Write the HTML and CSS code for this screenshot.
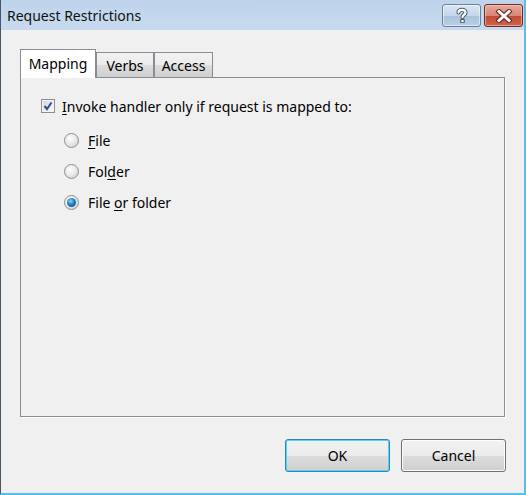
FILE: index.html
```html
<!DOCTYPE html>
<html>
<head>
<meta charset="utf-8">
<link rel="stylesheet" href="styles.css">
</head>
<body>
<div class="window">
  <div class="titlebar">
    <span class="title">Request Restrictions</span>
    <div class="caption-btns">
      <div class="cap-btn help">
        <svg width="16" height="17" viewBox="0 0 16 17">
          <path d="M4.5 5.5 C4.5 2 11.5 2 11.5 5.5 C11.5 7.8 8.5 7.8 8.5 10" fill="none" stroke="#4a5a6a" stroke-width="4.2" stroke-linecap="round"/>
          <rect x="6.3" y="12" width="4.4" height="4" fill="#4a5a6a"/>
          <path d="M4.5 5.5 C4.5 2 11.5 2 11.5 5.5 C11.5 7.8 8.5 7.8 8.5 10" fill="none" stroke="#fff" stroke-width="2.2" stroke-linecap="round"/>
          <rect x="7.4" y="13" width="2.2" height="2.2" fill="#fff"/>
        </svg>
      </div>
      <div class="cap-btn close">
        <svg width="18" height="14" viewBox="0 0 18 14">
          <path d="M4 2.5 L14 11.5 M14 2.5 L4 11.5" stroke="#5a2a22" stroke-width="5" stroke-linecap="square"/>
          <path d="M4 2.5 L14 11.5 M14 2.5 L4 11.5" stroke="#fff" stroke-width="3" stroke-linecap="square"/>
        </svg>
      </div>
    </div>
  </div>
  <div class="client">
    <div class="tabs">
      <div class="tab selected">Mapping</div>
      <div class="tab verbs">Verbs</div>
      <div class="tab access">Access</div>
    </div>
    <div class="panel">
      <div class="check-row">
        <span class="checkbox">
          <svg width="10" height="10" viewBox="0 0 10 10"><path d="M1.5 5 L4 8 L8.5 1.5" fill="none" stroke="#2c4f93" stroke-width="2"/></svg>
        </span>
        <span class="label"><u>I</u>nvoke handler only if request is mapped to:</span>
      </div>
      <div class="radios">
        <div class="radio-row"><span class="radio"></span><span class="label"><u>F</u>ile</span></div>
        <div class="radio-row"><span class="radio"></span><span class="label">Fol<u>d</u>er</span></div>
        <div class="radio-row"><span class="radio checked"></span><span class="label">File <u>o</u>r folder</span></div>
      </div>
    </div>
    <div class="buttons">
      <div class="btn default">OK</div>
      <div class="btn">Cancel</div>
    </div>
  </div>
</div>
</body>
</html>
```

FILE: styles.css
```css
html, body {
  margin: 0;
  padding: 0;
  background: #f0f0f0;
}
body {
  font-family: "Noto Sans", "Open Sans", sans-serif;
  font-size: 14px;
  color: #000;
}
.window {
  width: 526px;
  height: 495px;
  box-sizing: border-box;
  border-left: 1px solid #4a5564;
  border-right: 2px solid #4fc3ee;
  border-bottom: 2px solid #4fc3ee;
  display: flex;
  flex-direction: column;
  background: #f0f0f0;
}
.titlebar {
  height: 30px;
  flex: none;
  display: flex;
  align-items: flex-start;
  justify-content: space-between;
  background: linear-gradient(#bed3ec, #c8daef);
  box-sizing: border-box;
}
.title {
  margin: 6px 0 0 6px;
  font-size: 14px;
  color: #111;
}
.caption-btns {
  display: flex;
  gap: 3px;
  margin: 4px 1px 0 0;
}
.cap-btn {
  width: 39px;
  height: 23px;
  box-sizing: border-box;
  border-radius: 3px;
  display: flex;
  align-items: center;
  justify-content: center;
}
.help {
  border: 1px solid #6d8199;
  background: linear-gradient(#d8e6f4 0%, #c4d6ea 50%, #a9c1dc 51%, #b9d0e8 100%);
  box-shadow: inset 0 0 0 1px rgba(255,255,255,0.5);
}
.close {
  border: 1px solid #6e2a24;
  background: linear-gradient(#e9a99b 0%, #d88675 50%, #c24a34 51%, #d0624b 100%);
  box-shadow: inset 0 0 0 1px rgba(255,220,210,0.5);
}
.client {
  flex: 1;
  display: flex;
  flex-direction: column;
  padding: 20px 18px 0 19px;
}
.tabs {
  display: flex;
  align-items: flex-end;
  height: 28px;
  position: relative;
  z-index: 1;
  margin-bottom: -1px;
}
.tab {
  height: 25px;
  box-sizing: border-box;
  border: 1px solid #898c95;
  border-bottom: none;
  background: linear-gradient(#f2f2f2 0%, #ebebeb 50%, #dddddd 51%, #cfcfcf 100%);
  display: flex;
  align-items: center;
  justify-content: center;
  margin-bottom: 1px;
}
.tab.verbs {
  width: 58px;
}
.tab.access {
  width: 59px;
}
.tab.selected {
  width: 76px;
  height: 29px;
  background: #fff;
  padding-bottom: 2px;
  margin-bottom: 0;
}
.panel {
  width: 485px;
  height: 340px;
  box-sizing: border-box;
  border: 1px solid #898c95;
  background: #f0f0f0;
  box-shadow: 1px 1px 0 #fff;
  padding: 19px 0 0 20px;
}
.check-row {
  display: flex;
  align-items: center;
  height: 18px;
}
.checkbox {
  width: 14px;
  height: 14px;
  box-sizing: border-box;
  border: 1px solid #8e8f8f;
  background: linear-gradient(135deg, #d4d4d4, #fbfbfb);
  box-shadow: inset 0 0 0 1px #f4f4f4;
  display: flex;
  align-items: center;
  justify-content: center;
  margin-right: 7px;
}
.radios {
  display: flex;
  flex-direction: column;
  gap: 13px;
  margin: 16px 0 0 23px;
}
.radio-row {
  display: flex;
  align-items: center;
  height: 18px;
}
.radio {
  width: 15px;
  height: 15px;
  box-sizing: border-box;
  border-radius: 50%;
  border: 1px solid #8e8f8f;
  background: radial-gradient(circle at 40% 35%, #ffffff 0%, #e8e8e8 50%, #c8c8c8 100%);
  margin-right: 9px;
  display: flex;
  align-items: center;
  justify-content: center;
}
.radio.checked::after {
  content: "";
  width: 9px;
  height: 9px;
  border-radius: 50%;
  background: radial-gradient(circle at 40% 35%, #8fd8ff 0%, #1e7fc8 45%, #0b3f7a 100%);
}
.label u {
  text-decoration-thickness: 1px;
  text-underline-offset: 2px;
}
.buttons {
  display: flex;
  justify-content: flex-end;
  gap: 11px;
  margin-top: 22px;
}
.btn {
  width: 105px;
  height: 33px;
  box-sizing: border-box;
  border: 1px solid #707070;
  border-radius: 3px;
  background: linear-gradient(#f2f2f2 0%, #ebebeb 50%, #dddddd 51%, #cfcfcf 100%);
  box-shadow: inset 0 0 0 1px #fcfcfc;
  display: flex;
  align-items: center;
  justify-content: center;
}
.btn.default {
  border-color: #3c7fb1;
  box-shadow: inset 0 0 0 1px #48d8fb;
}
```
